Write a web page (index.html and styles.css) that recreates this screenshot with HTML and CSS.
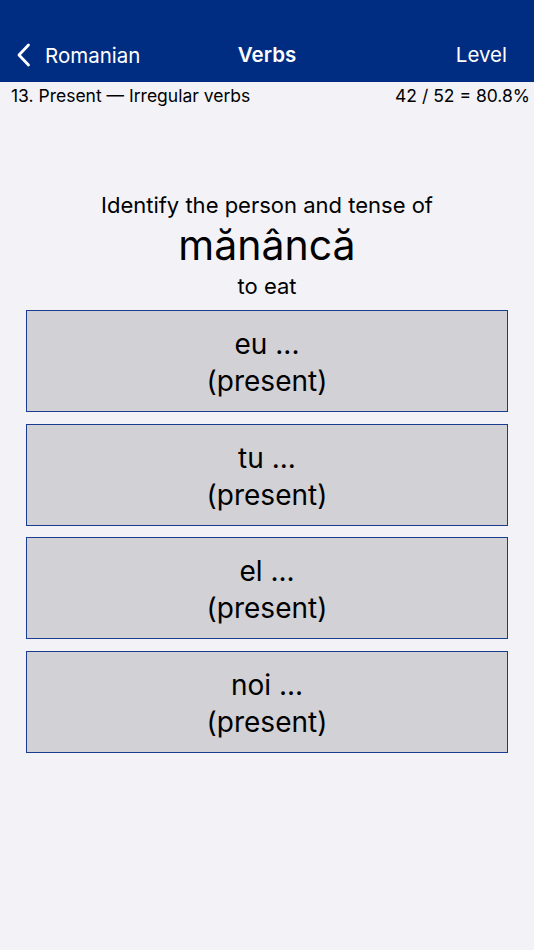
FILE: index.html
```html
<!DOCTYPE html>
<html>
<head>
<meta charset="utf-8">
<link rel="stylesheet" href="styles.css">
</head>
<body>
<header class="navbar">
  <div class="nav-left">
    <svg class="chevron" width="16" height="24" viewBox="0 0 16 24"><path d="M12.5 2 L3 12 L12.5 22" fill="none" stroke="#fff" stroke-width="2.8" stroke-linecap="round" stroke-linejoin="round"/></svg>
    <span>Romanian</span>
  </div>
  <div class="nav-title">Verbs</div>
  <div class="nav-right">Level</div>
</header>
<div class="subbar">
  <span>13. Present — Irregular verbs</span>
  <span>42 / 52 = 80.8%</span>
</div>
<main class="content">
  <div class="prompt">Identify the person and tense of</div>
  <div class="word">mănâncă</div>
  <div class="meaning">to eat</div>
  <div class="choices">
    <div class="choice">eu ...<br>(present)</div>
    <div class="choice">tu ...<br>(present)</div>
    <div class="choice">el ...<br>(present)</div>
    <div class="choice">noi ...<br>(present)</div>
  </div>
</main>
</body>
</html>
```
FILE: styles.css
```css
html, body {
  margin: 0;
  padding: 0;
}
body {
  width: 534px;
  height: 950px;
  background: #f2f2f7;
  font-family: Inter, "Noto Sans", sans-serif;
  color: #000;
  overflow: hidden;
}
.navbar {
  height: 82px;
  background: #002d82;
  color: #fff;
  display: flex;
  align-items: flex-end;
  justify-content: space-between;
  padding: 0 27px 13px 16px;
  box-sizing: border-box;
  position: relative;
  font-size: 20.5px;
}
.nav-left {
  display: flex;
  align-items: center;
  gap: 13px;
  height: 28px;
}
.chevron {
  display: block;
}
.nav-title {
  position: absolute;
  left: 0;
  right: 0;
  bottom: 13px;
  text-align: center;
  font-weight: 600;
  height: 28px;
  line-height: 28px;
  pointer-events: none;
}
.nav-right {
  height: 28px;
  line-height: 28px;
}
.subbar {
  display: flex;
  justify-content: space-between;
  padding: 4px 4px 0 11px;
  font-size: 17.5px;
  line-height: 20px;
  height: 28px;
  box-sizing: border-box;
}
.content {
  display: flex;
  flex-direction: column;
  align-items: center;
  padding-top: 81px;
}
.prompt {
  font-size: 22px;
  line-height: 28px;
}
.word {
  font-size: 41px;
  line-height: 50px;
  margin-top: 1px;
}
.meaning {
  font-size: 22px;
  line-height: 28px;
  margin-top: 2px;
}
.choices {
  display: flex;
  flex-direction: column;
  gap: 11.67px;
  margin-top: 10px;
  width: 482px;
}
.choice {
  height: 102px;
  box-sizing: border-box;
  border: 1.5px solid #1a3c8f;
  background: #d1d1d6;
  display: flex;
  align-items: center;
  justify-content: center;
  text-align: center;
  font-size: 28px;
  line-height: 37px;
  padding-top: 4px;
}
```
